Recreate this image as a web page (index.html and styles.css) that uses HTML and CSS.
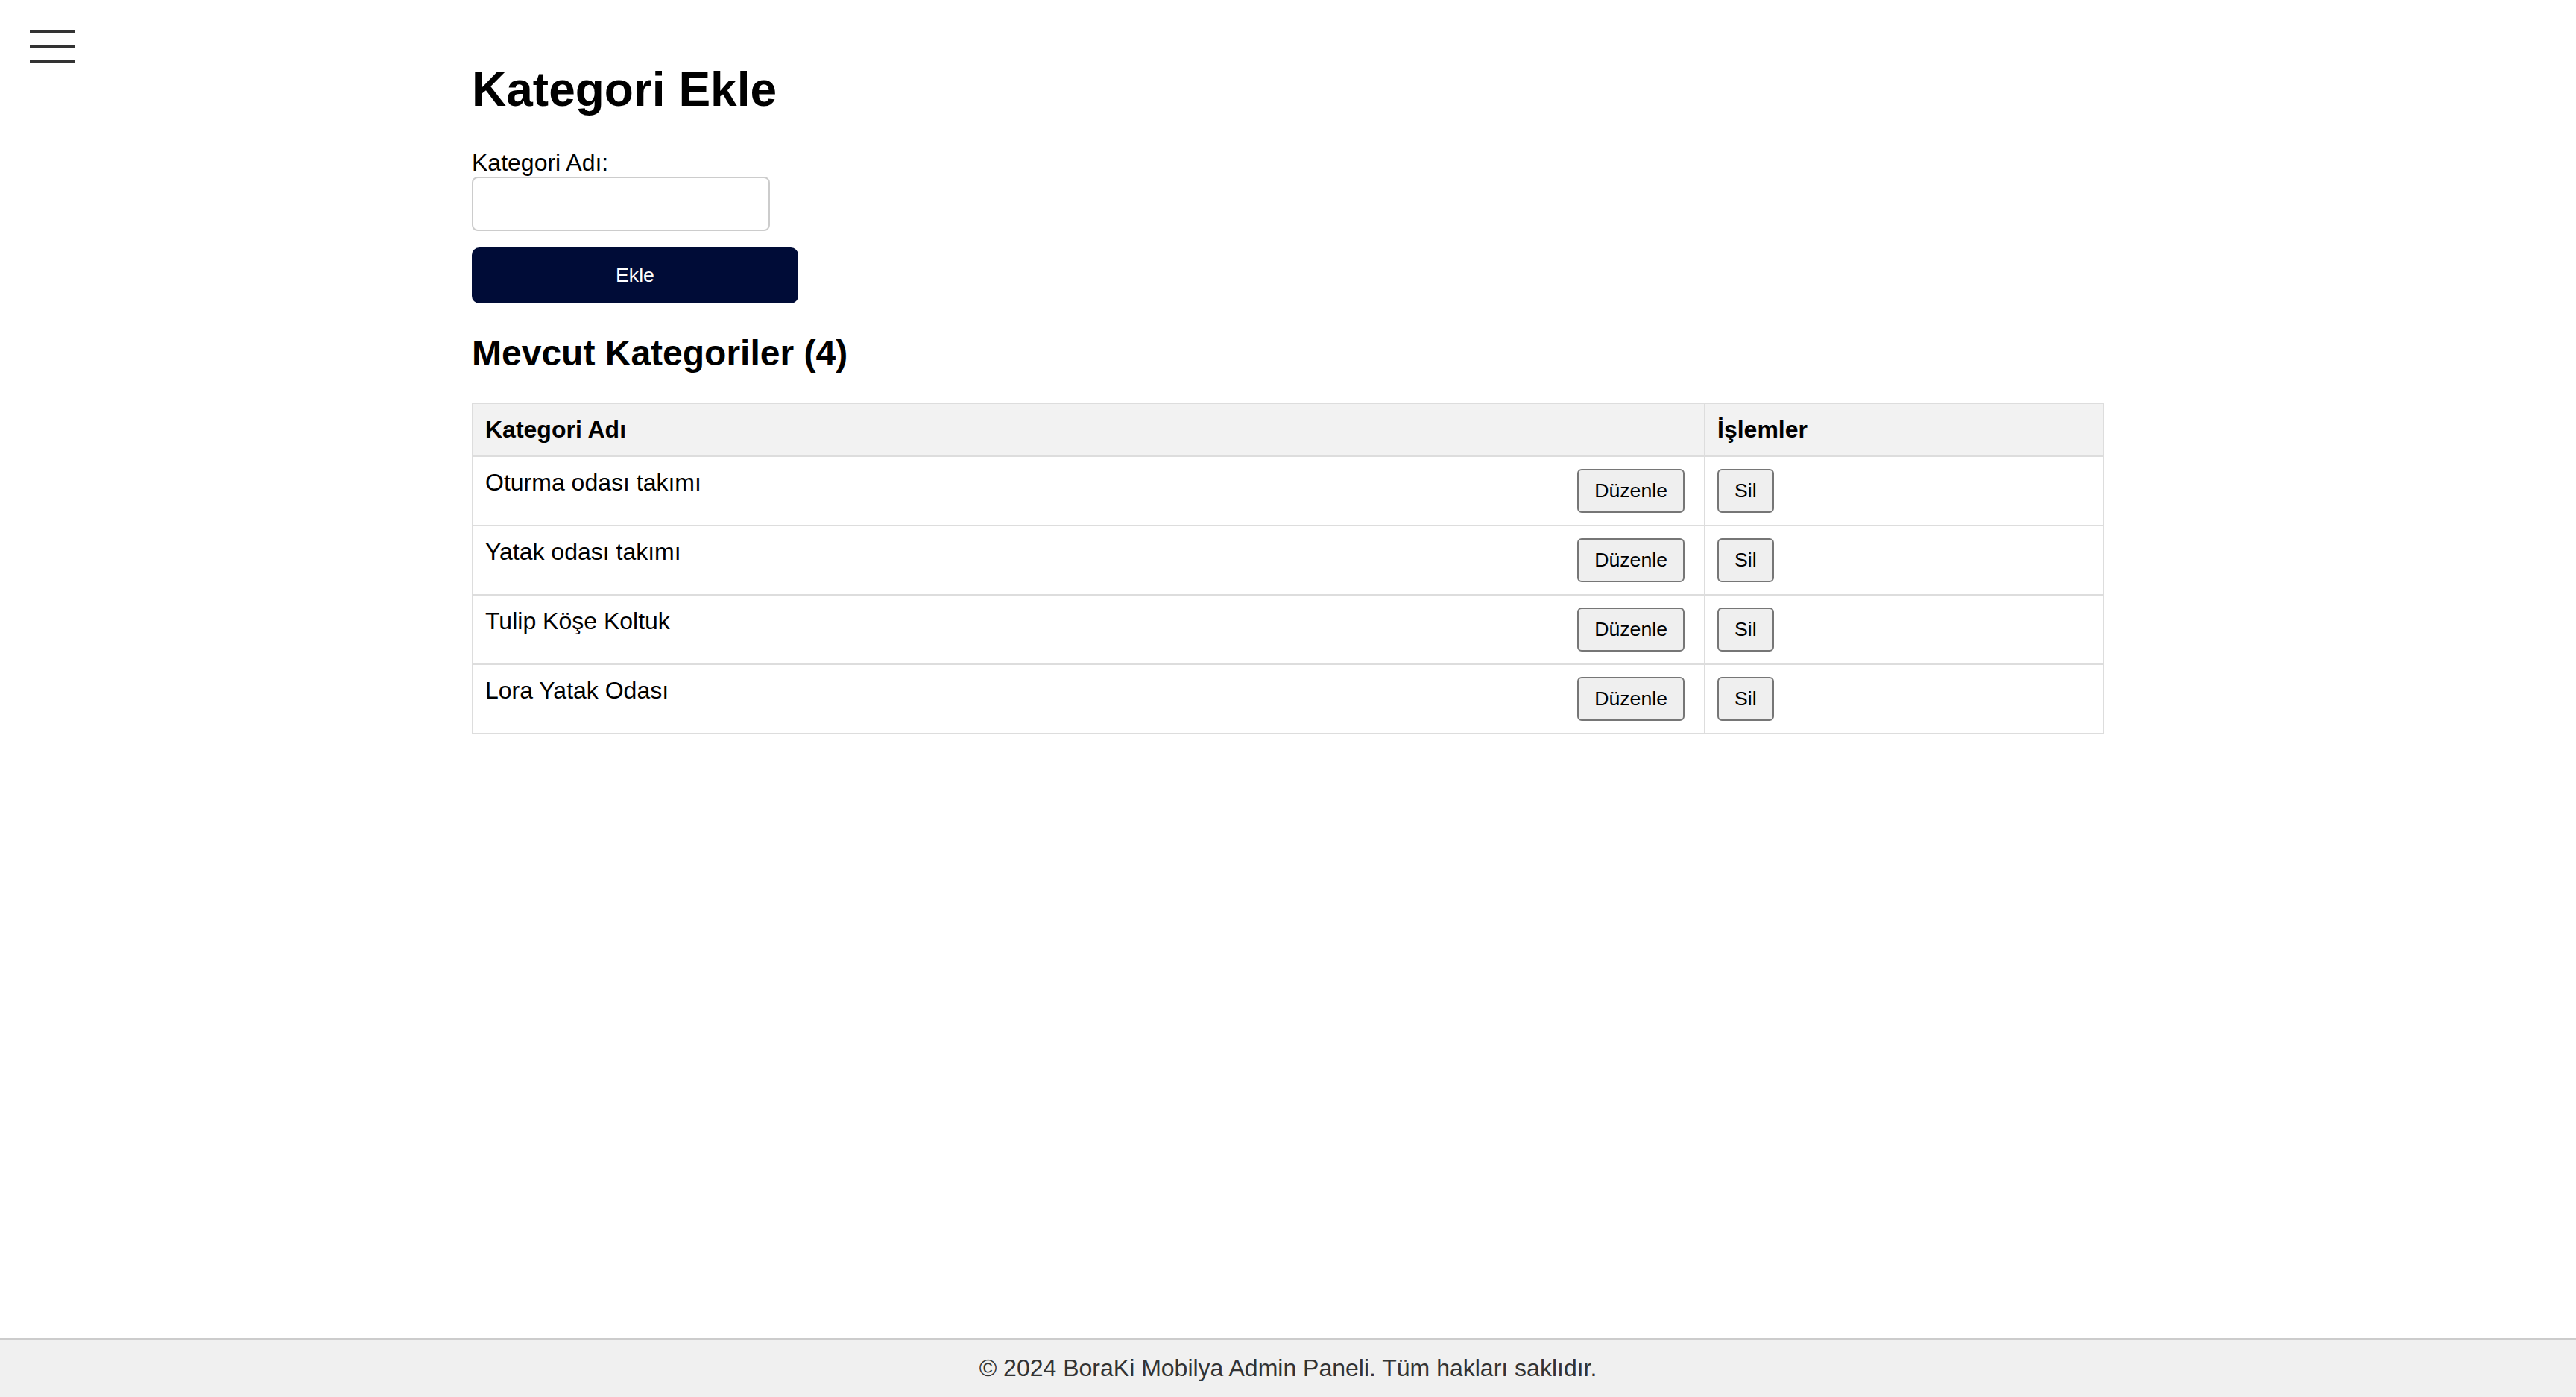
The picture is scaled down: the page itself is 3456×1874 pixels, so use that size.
FILE: index.html
```html
<!DOCTYPE html>
<html lang="tr">
<head>
<meta charset="utf-8">
<title>Kategori Ekle</title>
<link rel="stylesheet" href="styles.css">
</head>
<body>
<button class="menu-toggle" aria-label="Menü">
  <span class="bar"></span>
  <span class="bar"></span>
  <span class="bar"></span>
</button>
<main class="container">
  <h1 class="page-title">Kategori Ekle</h1>
  <form class="add-form">
    <label class="field-label" for="kategori">Kategori Adı:</label>
    <input class="field-input" id="kategori" type="text">
    <button class="submit-btn" type="button">Ekle</button>
  </form>
  <h2 class="section-title">Mevcut Kategoriler (4)</h2>
  <table class="cat-table">
    <thead>
      <tr>
        <th class="col-name">Kategori Adı</th>
        <th class="col-actions">İşlemler</th>
      </tr>
    </thead>
    <tbody>
      <tr>
        <td>Oturma odası takımı<button class="small-btn edit-btn" type="button">Düzenle</button></td>
        <td><button class="small-btn" type="button">Sil</button></td>
      </tr>
      <tr>
        <td>Yatak odası takımı<button class="small-btn edit-btn" type="button">Düzenle</button></td>
        <td><button class="small-btn" type="button">Sil</button></td>
      </tr>
      <tr>
        <td>Tulip Köşe Koltuk<button class="small-btn edit-btn" type="button">Düzenle</button></td>
        <td><button class="small-btn" type="button">Sil</button></td>
      </tr>
      <tr>
        <td>Lora Yatak Odası<button class="small-btn edit-btn" type="button">Düzenle</button></td>
        <td><button class="small-btn" type="button">Sil</button></td>
      </tr>
    </tbody>
  </table>
</main>
<footer class="site-footer">© 2024 BoraKi Mobilya Admin Paneli. Tüm hakları saklıdır.</footer>
</body>
</html>
```

FILE: styles.css
```css
html, body {
  margin: 0;
  padding: 0;
}

body {
  font-family: "Liberation Sans", Arial, Helvetica, sans-serif;
  font-size: 32px;
  color: #000;
  background: #fff;
  min-height: 100vh;
  display: flex;
  flex-direction: column;
}

.menu-toggle {
  position: fixed;
  top: 40px;
  left: 40px;
  width: 60px;
  padding: 0;
  margin: 0;
  border: 0;
  background: transparent;
  display: flex;
  flex-direction: column;
  gap: 16px;
  cursor: pointer;
}

.menu-toggle .bar {
  display: block;
  width: 60px;
  height: 4px;
  background: #333;
}

.container {
  flex: 1;
  width: 2190px;
  margin: 0 auto;
  padding-top: 40px;
}

.page-title {
  font-size: 64px;
  font-weight: bold;
  margin: 43px 0;
}

.add-form {
  display: flex;
  flex-direction: column;
  align-items: flex-start;
}

.field-label {
  display: block;
  font-size: 32px;
}

.field-input {
  box-sizing: border-box;
  width: 400px;
  height: 73px;
  padding: 16px;
  border: 2px solid #ccc;
  border-radius: 8px;
  font-family: inherit;
  font-size: 32px;
  margin: 0 0 22px 0;
  background: #fff;
}

.submit-btn {
  box-sizing: border-box;
  width: 438px;
  height: 75px;
  border: 0;
  border-radius: 10px;
  background: #000c37;
  color: #fff;
  font-family: inherit;
  font-size: 26.67px;
  cursor: pointer;
}

.section-title {
  font-size: 48px;
  font-weight: bold;
  margin: 39px 0 39px 0;
}

.cat-table {
  width: 2190px;
  border-collapse: collapse;
  table-layout: fixed;
}

.cat-table th,
.cat-table td {
  border: 2px solid #ddd;
  padding: 16px;
  text-align: left;
  vertical-align: top;
  font-size: 32px;
}

.cat-table th {
  background: #f2f2f2;
  font-weight: bold;
}

.col-name {
  width: 1619px;
}

.small-btn {
  box-sizing: border-box;
  display: inline-block;
  vertical-align: top;
  background: #efefef;
  border: 2px solid #767676;
  border-radius: 6px;
  padding: 12px 21px;
  font-family: inherit;
  font-size: 26.67px;
  color: #000;
  cursor: pointer;
}

.edit-btn {
  float: right;
  margin-right: 10px;
}

.site-footer {
  background: #f0f0f0;
  border-top: 2px solid #ccc;
  color: #333;
  text-align: center;
  padding: 20px;
  font-size: 32px;
}
```
